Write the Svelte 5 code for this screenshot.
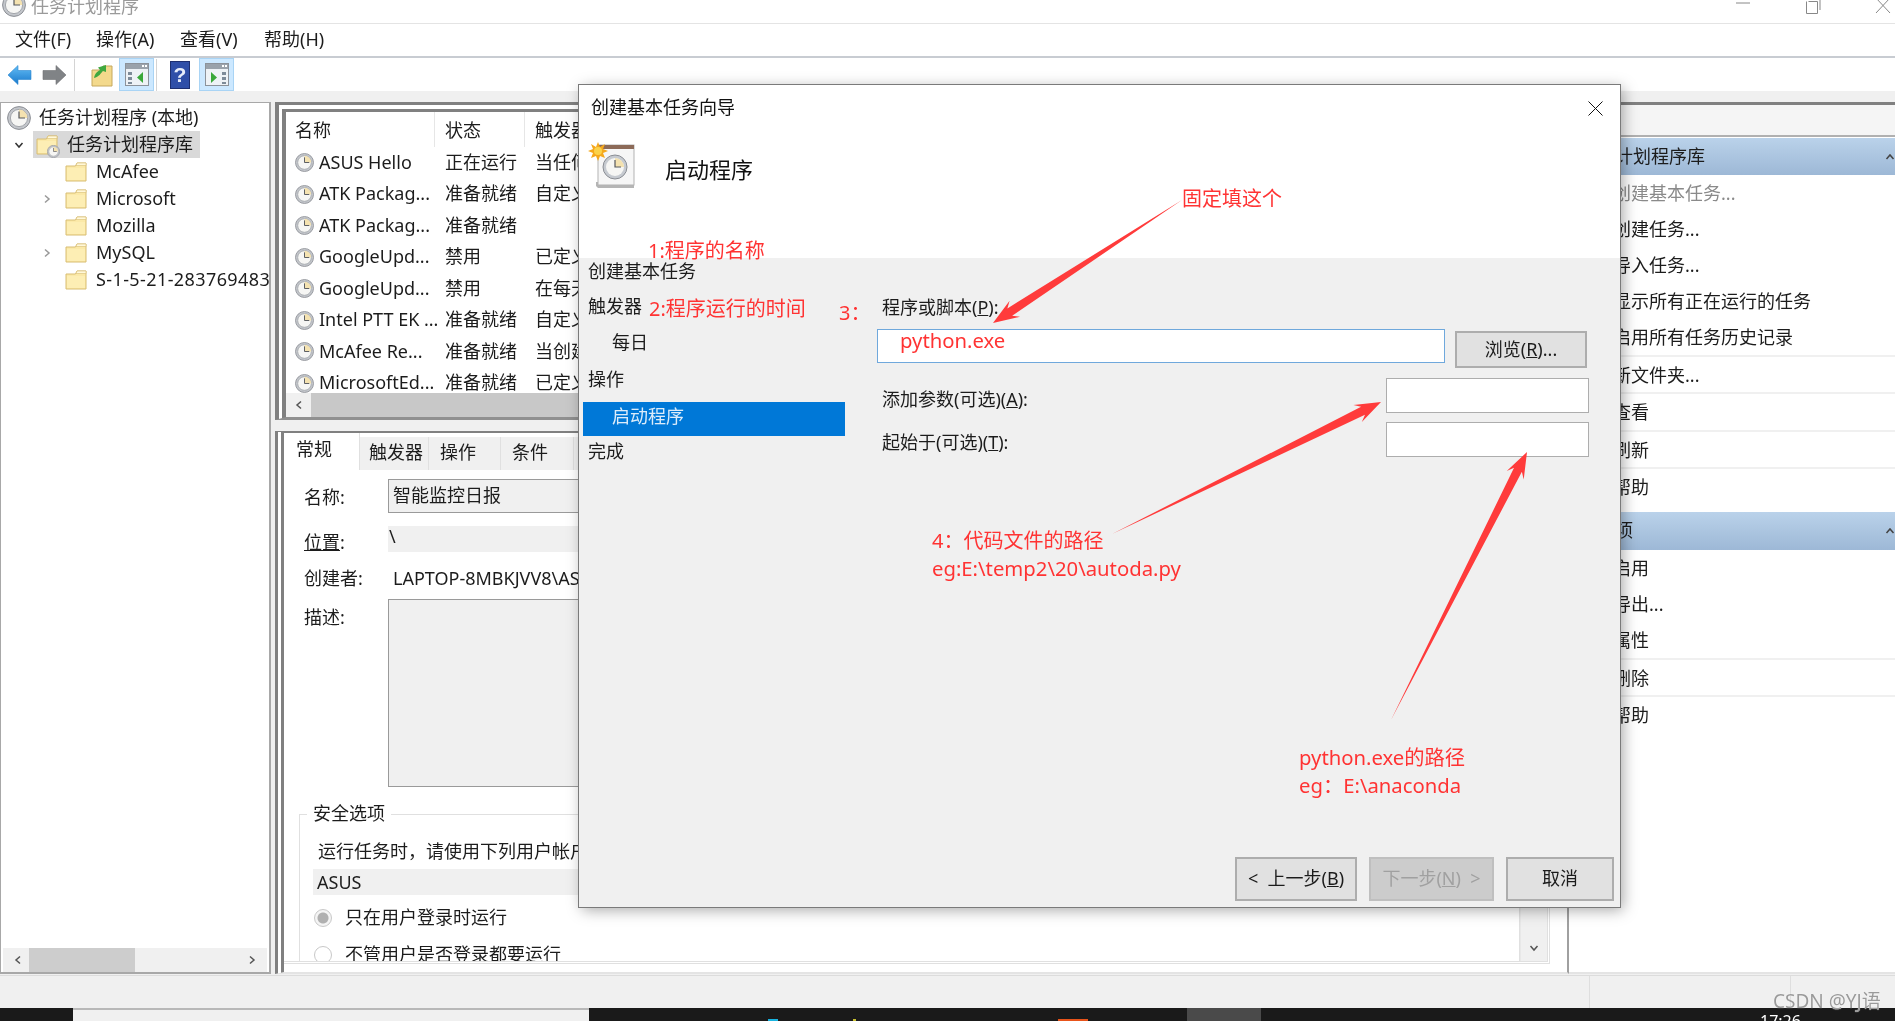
<script lang="ts">
	const menus = ['文件(F)', '操作(A)', '查看(V)', '帮助(H)'];

	const folders = [
		{ name: 'McAfee', more: false },
		{ name: 'Microsoft', more: true },
		{ name: 'Mozilla', more: false },
		{ name: 'MySQL', more: true },
		{ name: 'S-1-5-21-283769483', more: false, long: true }
	];

	const tasks = [
		['ASUS Hello', '正在运行', '当任何用户登录时'],
		['ATK Packag...', '准备就绪', '自定义'],
		['ATK Packag...', '准备就绪', ''],
		['GoogleUpd...', '禁用', '已定义多个触发器'],
		['GoogleUpd...', '禁用', '在每天的 11:00'],
		['Intel PTT EK ...', '准备就绪', '自定义'],
		['McAfee Re...', '准备就绪', '当创建或修改任务时'],
		['MicrosoftEd...', '准备就绪', '已定义多个触发器']
	];

	const libActions = [
		{ text: '创建基本任务...', off: true },
		{ text: '创建任务...' },
		{ text: '导入任务...' },
		{ text: '显示所有正在运行的任务' },
		{ text: '启用所有任务历史记录', sep: true },
		{ text: '新文件夹...', sep: true },
		{ text: '查看', sep: true },
		{ text: '刷新', sep: true },
		{ text: '帮助' }
	];

	const itemActions = [
		{ text: '启用' },
		{ text: '导出...' },
		{ text: '属性', sep: true },
		{ text: '删除', sep: true },
		{ text: '帮助' }
	];

	const steps = [
		{ text: '创建基本任务', h: 28 },
		{ text: '触发器', h: 42 },
		{ text: '每日', h: 30, sub: true },
		{ text: '操作', h: 44 },
		{ text: '启动程序', h: 34, sub: true, on: true },
		{ text: '完成', h: 32 }
	];

	const notes = [
		{ x: 1182, y: 199, text: '固定填这个' },
		{ x: 648, y: 251, text: '1:程序的名称' },
		{ x: 649, y: 309, text: '2:程序运行的时间' },
		{ x: 839, y: 313, text: '3：' },
		{ x: 900, y: 340, text: 'python.exe', latin: true },
		{ x: 932, y: 541, text: '4：代码文件的路径' },
		{ x: 932, y: 568, text: 'eg:E:\\temp2\\20\\autoda.py', latin: true },
		{ x: 1299, y: 757, text: 'python.exe的路径', latin: true },
		{ x: 1299, y: 785, text: 'eg：E:\\anaconda', latin: true }
	];

	// wedge arrow, thin at the tail and thick at the neck
	function arrow(tx: number, ty: number, px: number, py: number) {
		const len = Math.hypot(px - tx, py - ty);
		const dx = (px - tx) / len;
		const dy = (py - ty) / len;
		const at = (back: number, side: number) =>
			`${px - dx * back - dy * side},${py - dy * back + dx * side}`;
		return [`${tx},${ty}`, at(20, 4.4), at(26, 9.5), `${px},${py}`, at(26, -9.5), at(20, -4.4)].join(' ');
	}

	const arrows = [
		arrow(1182, 200, 993, 323),
		arrow(1112, 534, 1381, 402),
		arrow(1391, 720, 1527, 452)
	];
</script>

{#snippet clock(size: number)}
	<svg class="icon" width={size} height={size} viewBox="0 0 24 24">
		<circle cx="12" cy="12" r="11.4" fill="#c3c6cb" stroke="#8b8e94" />
		<circle cx="12" cy="12" r="8.6" fill="#f6f6f4" stroke="#a4a7ac" />
		<path d="M12 12V3.6A8.4 8.4 0 0 1 20.4 12Z" fill="#f4e2b0" />
		<path d="M12 5.5V12H18" fill="none" stroke="#55585e" stroke-width="1.2" />
	</svg>
{/snippet}

{#snippet folder()}
	<svg class="icon" width="22" height="20" viewBox="0 0 22 20">
		<path d="M1 4V19H21V1H12L10.5 4Z" fill="#fbe9a8" stroke="#d8bd73" />
		<path d="M12 1H21V3.5H11Z" fill="#fff8da" stroke="#d8bd73" stroke-width=".6" />
		<path d="M2 6H20V18H2Z" fill="#fdeeb4" />
	</svg>
{/snippet}

{#snippet chevron(dir: string, color = '#555')}
	<svg class="icon chev {dir}" width="10" height="10" viewBox="0 0 10 10">
		<path d="M3 1.5 7 5 3 8.5" fill="none" stroke={color} stroke-width="1.5" />
	</svg>
{/snippet}

{#snippet paneIcon(flip: boolean)}
	<svg width="24" height="23" viewBox="0 0 24 23">
		<rect x=".5" y=".5" width="23" height="22" fill="#eef2f6" stroke="#8c929a" />
		<rect x="1" y="1" width="22" height="5" fill="#9aa2ab" />
		<rect x="17" y="2" width="2" height="2" fill="#fff" />
		<rect x="20" y="2" width="2" height="2" fill="#fff" />
		<g fill="#7d8b99">
			<rect x={flip ? 17 : 3} y="9" width="4" height="3" />
			<rect x={flip ? 17 : 3} y="14" width="4" height="3" />
			<rect x={flip ? 17 : 3} y="19" width="4" height="2" />
		</g>
		<path d={flip ? 'M6 9 12 14.5 6 20Z' : 'M18 9 12 14.5 18 20Z'} fill="#3aa83a" />
	</svg>
{/snippet}

<div class="win">
	<header class="titlebar">
		<div class="title-icon">{@render clock(24)}</div>
		<span class="title-text">任务计划程序</span>
		<div class="controls">
			<svg width="16" height="10" viewBox="0 0 16 10"><path d="M1 5H15" stroke="#888" /></svg>
			<svg width="16" height="16" viewBox="0 0 16 16"><path d="M3.5 3.5H12.5V15.5H1.5V3.5M4 .5H15V12" fill="none" stroke="#888" /></svg>
			<svg width="16" height="16" viewBox="0 0 16 16"><path d="M1 0 15 15M15 0 1 15" stroke="#888" /></svg>
		</div>
	</header>

	<nav class="menubar">
		{#each menus as m}
			<span class="menu">{m}</span>
		{/each}
	</nav>

	<div class="toolbar">
		<svg class="tool-back" width="25" height="24" viewBox="0 0 25 24">
			<defs>
				<linearGradient id="bk" x1="0" y1="0" x2="0" y2="1">
					<stop offset="0" stop-color="#63bdf5" />
					<stop offset="1" stop-color="#1878cc" />
				</linearGradient>
			</defs>
			<path d="M1 12 11 2.5V7.5H24V16.5H11V21.5Z" fill="url(#bk)" stroke="#2a86d0" stroke-width=".6" />
		</svg>
		<svg class="tool-fwd" width="25" height="24" viewBox="0 0 25 24">
			<path d="M24 12 14 2.5V7.5H1V16.5H14V21.5Z" fill="#808386" stroke="#6e7073" stroke-width=".6" />
		</svg>
		<span class="tool-sep first"></span>
		<svg class="tool-up" width="22" height="24" viewBox="0 0 22 24">
			<path d="M1 7V23H21V3H12L10 7Z" fill="#f3d98c" stroke="#c6a85c" />
			<path d="M3 15C4 10 7 8 9 7L7 4.5 15 2 15 9 12 8C10 10 8 14 3 15Z" fill="#3fa83f" />
		</svg>
		<span class="tool-btn">{@render paneIcon(false)}</span>
		<span class="tool-sep"></span>
		<svg class="tool-help" width="20" height="28" viewBox="0 0 20 28">
			<rect x=".5" y=".5" width="19" height="27" fill="#2f4fa8" stroke="#1d2f70" />
			<text x="10" y="21" text-anchor="middle" font-size="21" font-family="Liberation Sans" font-weight="700" fill="#e8eefa">?</text>
		</svg>
		<span class="tool-btn last">{@render paneIcon(true)}</span>
	</div>

	<main class="main">
		<aside class="tree">
			<div class="tree-list">
				<div class="tree-row root">
					{@render clock(24)}
					<span>任务计划程序 (本地)</span>
				</div>
				<div class="tree-row lib">
					{@render chevron('down', '#333')}
					<div class="lib-sel">
						<span class="lib-icon">
							{@render folder()}
							<span class="lib-clock">{@render clock(13)}</span>
						</span>
						<span>任务计划程序库</span>
					</div>
				</div>
				{#each folders as f}
					<div class="tree-row child">
						<span class="child-arrow">
							{#if f.more}{@render chevron('right', '#999')}{/if}
						</span>
						{@render folder()}
						<span class="child-name" class:long={f.long}>{f.name}</span>
					</div>
				{/each}
			</div>
			<div class="hscroll">
				{@render chevron('left', '#555')}
				<span class="hthumb"></span>
				{@render chevron('right', '#555')}
			</div>
		</aside>

		<section class="center">
			<div class="pane list-pane">
				<div class="list-head grid">
					<span>名称</span>
					<span>状态</span>
					<span>触发器</span>
				</div>
				<div class="list-body">
					{#each tasks as t}
						<div class="grid list-row">
							<span class="task-name">{@render clock(19)}<span>{t[0]}</span></span>
							<span>{t[1]}</span>
							<span>{t[2]}</span>
						</div>
					{/each}
				</div>
				<div class="list-scroll">
					<span class="ls-btn">{@render chevron('left', '#555')}</span>
				</div>
			</div>

			<div class="pane detail-pane">
				<div class="tabs">
					<span class="tab active">常规</span>
					<span class="tab t1">触发器</span>
					<span class="tab t2">操作</span>
					<span class="tab t3">条件</span>
					<span class="tab t3">设置</span>
					<span class="tab t3">历史记录(已禁用)</span>
				</div>
				<div class="detail-body">
					<div class="detail-form">
						<div class="field f-name">
							<span class="lab">名称:</span>
							<div class="val box">智能监控日报</div>
						</div>
						<div class="field f-loc">
							<span class="lab"><u>位置</u>:</span>
							<div class="val plain">\</div>
						</div>
						<div class="field f-by">
							<span class="lab">创建者:</span>
							<div class="val bare">LAPTOP-8MBKJVV8\ASUS</div>
						</div>
						<div class="field f-desc">
							<span class="lab">描述:</span>
							<div class="val area"></div>
						</div>
						<div class="security">
							<span class="legend">安全选项</span>
							<div class="sec-line">运行任务时，请使用下列用户帐户:</div>
							<div class="sec-user">ASUS</div>
							<div class="radio-row">
								<span class="radio on"></span>
								<span>只在用户登录时运行</span>
							</div>
							<div class="radio-row second">
								<span class="radio"></span>
								<span>不管用户是否登录都要运行</span>
							</div>
						</div>
					</div>
					<div class="vscroll">{@render chevron('down', '#555')}</div>
				</div>
			</div>
		</section>

		<aside class="actions">
			<div class="act-title">操作</div>
			<div class="act-head"><span>任务计划程序库</span>{@render chevron('up', '#444')}</div>
			{#each libActions as a}
				<div class="act-row" class:off={a.off} class:sep={a.sep}>{a.text}</div>
			{/each}
			<div class="act-head second"><span>所选项</span>{@render chevron('up', '#444')}</div>
			{#each itemActions as a}
				<div class="act-row" class:sep={a.sep}>{a.text}</div>
			{/each}
		</aside>
	</main>

	<div class="statusbar">
		<span class="st a"></span>
		<span class="st b"></span>
	</div>

	<footer class="taskbar">
		<span class="tb-start"></span>
		<span class="tb-search"></span>
		<span class="tb-dot cyan"></span>
		<span class="tb-dot yellow"></span>
		<span class="tb-dot orange"></span>
		<span class="tb-active"></span>
		<span class="tb-time">17:26</span>
	</footer>

	<div class="dialog">
		<div class="dlg-title">
			<span>创建基本任务向导</span>
			<svg width="15" height="15" viewBox="0 0 15 15"><path d="M.5.5 14.5 14.5M14.5.5.5 14.5" stroke="#111" /></svg>
		</div>
		<div class="dlg-head">
			<svg width="48" height="47" viewBox="0 0 48 47">
				<path d="M8 40V44L10 46H46V40Z" fill="#b5b5b5" />
				<rect x="10" y="3" width="36" height="40" fill="#f6f6f6" stroke="#b3b3b3" />
				<rect x="10" y="3" width="36" height="4" fill="#8c6a58" />
				<circle cx="27" cy="25" r="12" fill="#c6cad0" stroke="#8b8e94" />
				<circle cx="27" cy="25" r="9" fill="#f6f6f4" />
				<path d="M27 25V16A9 9 0 0 1 36 25Z" fill="#f4e2b0" />
				<path d="M27 18V25H33" fill="none" stroke="#55585e" stroke-width="1.2" />
				<path d="M10 0 12 5 17 2 15 7 20 9 15 11 17 16 12 14 10 19 8 14 3 16 5 11 0 9 5 7 3 2 8 5Z" fill="#f5a81c" />
				<circle cx="10" cy="9" r="4" fill="#fbd24a" />
			</svg>
			<span class="dlg-heading">启动程序</span>
		</div>
		<div class="dlg-body">
			<div class="steps">
				{#each steps as s}
					<div class="step" class:sub={s.sub} class:on={s.on} style="height:{s.h}px">{s.text}</div>
				{/each}
			</div>
			<div class="form">
				<div class="form-label">程序或脚本(<u>P</u>):</div>
				<div class="prog-row">
					<div class="prog-input"></div>
					<button class="btn browse">浏览(<u>R</u>)...</button>
				</div>
				<div class="opt-row">
					<span class="opt-label">添加参数(可选)(<u>A</u>):</span>
					<div class="opt-input"></div>
				</div>
				<div class="opt-row next">
					<span class="opt-label">起始于(可选)(<u>T</u>):</span>
					<div class="opt-input"></div>
				</div>
			</div>
		</div>
		<div class="dlg-foot">
			<button class="btn back">&lt;&nbsp; 上一步(<u>B</u>)</button>
			<button class="btn fwd">下一步(<u>N</u>) &nbsp;&gt;</button>
			<button class="btn cancel">取消</button>
		</div>
	</div>

	<svg class="arrows" width="1895" height="1021" viewBox="0 0 1895 1021">
		{#each arrows as pts}
			<polygon points={pts} fill="#ff3b3b" />
		{/each}
	</svg>

	{#each notes as n}
		<span class="note" class:latin={n.latin} style="left:{n.x}px;top:{n.y}px">{n.text}</span>
	{/each}

	<span class="mark">CSDN @YJ语</span>
</div>

<style>
	:global(body) {
		margin: 0;
		background: #fff;
	}

	.win {
		position: relative;
		width: 1895px;
		height: 1021px;
		overflow: hidden;
		display: flex;
		flex-direction: column;
		background: #f0f0f0;
		color: #1c1c1c;
		font-family: 'Noto Sans', 'Noto Sans CJK SC', sans-serif;
		font-size: 18px;
		line-height: 1.2;
		filter: blur(0.4px);
	}

	.icon {
		flex: none;
		display: block;
	}

	.chev.down {
		transform: rotate(90deg);
	}
	.chev.left {
		transform: rotate(180deg);
	}
	.chev.up {
		transform: rotate(-90deg);
	}

	.titlebar {
		height: 23px;
		flex: none;
		display: flex;
		background: #fff;
		border-bottom: 1px solid #e4e4e4;
		overflow: hidden;
	}

	.title-icon {
		margin: -7px 0 0 2px;
	}

	.title-text {
		margin: -4px 0 0 5px;
		color: #9a9a9a;
	}

	.controls {
		margin-left: auto;
		display: flex;
		gap: 54px;
		padding-right: 4px;
		margin-top: -2px;
		align-items: flex-start;
	}

	.menubar {
		height: 32px;
		flex: none;
		display: flex;
		align-items: center;
		gap: 22px;
		padding-left: 15px;
		background: #fff;
		border-bottom: 2px solid #c8ccd2;
	}

	.menu {
		width: 62px;
		white-space: nowrap;
	}
	.menu:first-child {
		width: 59px;
	}

	.toolbar {
		height: 33px;
		flex: none;
		display: flex;
		align-items: center;
		background: #fff;
		border-bottom: 1px solid #f0f0f0;
	}

	.tool-back {
		margin-left: 7px;
	}
	.tool-fwd {
		margin-left: 10px;
	}

	.tool-sep {
		width: 1px;
		height: 32px;
		background: #d4d4d4;
		margin-left: 2px;
	}
	.tool-sep.first {
		margin-left: 7px;
	}

	.tool-up {
		margin-left: 16px;
	}

	.tool-btn {
		width: 35px;
		height: 33px;
		box-sizing: border-box;
		display: flex;
		align-items: center;
		justify-content: center;
		background: #cce8ff;
		border: 1px solid #a9d4f5;
		margin-left: 6px;
	}
	.tool-btn.last {
		margin-left: 9px;
	}

	.tool-help {
		margin-left: 13px;
	}

	.main {
		flex: 1;
		min-height: 0;
		display: flex;
		padding-top: 10px;
	}

	.tree {
		width: 271px;
		flex: none;
		box-sizing: border-box;
		display: flex;
		flex-direction: column;
		background: #fff;
		border: 1px solid #a8a8a8;
		border-width: 1px 2px 2px 1px;
	}

	.tree-list {
		flex: 1;
		overflow: hidden;
	}

	.tree-row {
		height: 27px;
		display: flex;
		align-items: center;
		white-space: nowrap;
	}

	.tree-row.root {
		padding-left: 6px;
		gap: 8px;
		margin-top: 1px;
	}

	.tree-row.lib {
		padding-left: 13px;
		gap: 9px;
	}

	.lib-sel {
		width: 167px;
		height: 27px;
		display: flex;
		align-items: center;
		gap: 9px;
		padding-left: 3px;
		box-sizing: border-box;
		background: #d9d9d9;
	}

	.lib-icon {
		position: relative;
		display: block;
	}

	.lib-clock {
		position: absolute;
		right: -2px;
		bottom: -3px;
	}

	.child-arrow {
		width: 10px;
		margin-left: 41px;
		flex: none;
	}

	.tree-row.child :global(svg:not(.chev)) {
		margin-left: 13px;
	}

	.child-name {
		margin-left: 9px;
	}

	.child-name.long {
		letter-spacing: 0.4px;
	}

	.hscroll {
		height: 24px;
		margin: 0 2px;
		flex: none;
		display: flex;
		align-items: center;
		background: #f0f0f0;
		padding: 0 10px;
	}

	.hthumb {
		width: 106px;
		height: 24px;
		margin: 0 auto 0 6px;
		background: #cdcdcd;
	}

	.center {
		width: 1294px;
		flex: none;
		margin-left: 4px;
		display: flex;
		flex-direction: column;
	}

	.pane {
		box-sizing: border-box;
		background: #fff;
		border-style: double;
		border-color: #808080;
		border-width: 10px 0 0 11px;
		overflow: hidden;
	}

	.list-pane {
		height: 318px;
		flex: none;
		display: flex;
		flex-direction: column;
		border-bottom: 3px solid #909090;
		margin-bottom: 11px;
	}

	.grid {
		display: grid;
		grid-template-columns: 149px 90px 1fr;
		white-space: nowrap;
	}

	.grid > span {
		padding-left: 10px;
	}
	.grid > span:first-child {
		padding-left: 9px;
	}

	.list-head {
		height: 35px;
		flex: none;
		align-items: center;
	}

	.list-head > span {
		height: 35px;
		line-height: 36px;
		box-sizing: border-box;
		border-right: 1px solid #e6e6e6;
	}

	.list-body {
		flex: 1;
		min-height: 0;
		overflow: hidden;
	}

	.list-row {
		height: 31.5px;
		align-items: center;
	}

	.task-name {
		display: flex;
		align-items: center;
		gap: 5px;
	}

	.list-scroll {
		height: 24px;
		flex: none;
		background: #c8c8c8;
	}

	.ls-btn {
		width: 25px;
		height: 24px;
		background: #f0f0f0;
		display: flex;
		align-items: center;
		justify-content: center;
	}

	.detail-pane {
		flex: 1;
		min-height: 0;
		display: flex;
		flex-direction: column;
		padding: 0 17px 0 0;
		border-width: 2px 2px 2px 3px;
		border-style: solid;
		border-color: #808080 #a0a0a0 #e4e4e4 #808080;
		border-left-width: 9px;
		border-left-style: double;
	}

	.tabs {
		height: 37px;
		flex: none;
		display: flex;
		align-items: flex-end;
		white-space: nowrap;
	}

	.tab {
		height: 33px;
		box-sizing: border-box;
		padding: 5px 0 0 7px;
		background: #f0f0f0;
		border-right: 1px solid #e0e0e0;
	}

	.tab.active {
		width: 76px;
		height: 37px;
		padding: 6px 0 0 12px;
		background: #fff;
	}
	.tab.t1 {
		width: 69px;
		padding-left: 9px;
	}
	.tab.t2 {
		width: 72px;
		padding-left: 11px;
	}
	.tab.t3 {
		width: 73px;
		padding-left: 11px;
	}

	.detail-body {
		height: 491px;
		flex: none;
		display: flex;
		overflow: hidden;
		border-right: 3px double #e0e0e0;
		border-bottom: 3px double #e0e0e0;
	}

	.detail-form {
		flex: 1;
		padding: 9px 0 0 20px;
		box-sizing: border-box;
		border-right: 1px solid #e8e8e8;
		overflow: hidden;
	}

	.field {
		display: flex;
		align-items: center;
	}

	.lab {
		width: 84px;
		flex: none;
	}

	.val {
		flex: 1;
		box-sizing: border-box;
	}

	.f-name {
		height: 34px;
	}
	.f-name .lab {
		padding-top: 4px;
	}

	.box {
		height: 34px;
		line-height: 30px;
		padding-left: 4px;
		background: #f0f0f0;
		border: 1px solid #9a9a9a;
	}

	.f-loc {
		height: 26px;
		margin-top: 13px;
	}
	.f-loc .lab {
		padding-top: 8px;
	}

	.plain {
		height: 26px;
		line-height: 20px;
		padding-left: 1px;
		background: #f0f0f0;
	}

	.f-by {
		height: 26px;
		margin-top: 14px;
	}

	.bare {
		padding-left: 5px;
		white-space: nowrap;
	}

	.f-desc {
		height: 188px;
		margin-top: 7px;
		align-items: flex-start;
	}
	.f-desc .lab {
		padding-top: 8px;
	}

	.area {
		height: 188px;
		background: #f0f0f0;
		border: 1px solid #9a9a9a;
	}

	.security {
		position: relative;
		margin: 27px 0 0 -5px;
		padding: 25px 0 0 13px;
		border: 1px solid #e0e0e0;
		border-bottom: none;
	}

	.legend {
		position: absolute;
		left: 7px;
		top: -12px;
		padding: 0 6px;
		background: #fff;
	}

	.sec-line {
		padding-left: 5px;
		height: 22px;
		line-height: 22px;
	}

	.sec-user {
		height: 26px;
		line-height: 26px;
		margin-top: 7px;
		padding-left: 4px;
		background: #f0f0f0;
	}

	.radio-row {
		display: flex;
		align-items: center;
		gap: 13px;
		height: 24px;
		margin: 11px 0 0 1px;
	}
	.radio-row.second {
		margin-top: 13px;
	}

	.radio {
		width: 18px;
		height: 18px;
		box-sizing: border-box;
		border: 1px solid #c8c8c8;
		border-radius: 50%;
		background: #fff;
		display: block;
	}

	.radio.on {
		background: radial-gradient(circle, #b0b0b0 0 5px, #f4f4f4 6px);
	}

	.vscroll {
		width: 26px;
		flex: none;
		background: #f0f0f0;
		display: flex;
		align-items: flex-end;
		justify-content: center;
		padding-bottom: 8px;
		box-sizing: border-box;
	}

	.actions {
		flex: 1;
		min-width: 0;
		background: #fff;
		border-top: 3px solid #808080;
		border-bottom: 2px solid #e4e4e4;
		white-space: nowrap;
		overflow: hidden;
	}

	.act-title {
		height: 30px;
		line-height: 30px;
		padding-left: 10px;
		background: #f5f5f5;
		border-bottom: 2px solid #b0b0b0;
	}

	.act-head {
		height: 37px;
		display: flex;
		align-items: center;
		justify-content: space-between;
		padding: 0 0 0 10px;
		margin-top: 1px;
		background: linear-gradient(#bad2ea, #9db8d6);
	}

	.act-head.second {
		margin-top: 7px;
		height: 38px;
	}

	.act-row {
		height: 36px;
		line-height: 36px;
		padding-left: 44px;
	}

	.act-row.off {
		color: #8a8a8a;
	}

	.act-row.sep {
		height: 37.5px;
		box-sizing: border-box;
		border-bottom: 2px solid #f0f0f0;
	}

	.statusbar {
		height: 33px;
		flex: none;
		position: relative;
		display: flex;
		box-sizing: border-box;
		border-top: 1px solid #dcdcdc;
		margin-top: 1px;
	}

	.st {
		width: 1px;
		height: 32px;
		background: #dedede;
	}
	.st.a {
		margin-left: 1589px;
	}
	.st.b {
		margin-left: 200px;
	}

	.taskbar {
		height: 13px;
		flex: none;
		display: flex;
		background: #1a1a1a;
		overflow: hidden;
	}

	.tb-start {
		width: 73px;
	}

	.tb-search {
		width: 516px;
		box-sizing: border-box;
		background: #f0f0f0;
		border-top: 2px solid #b8b8b8;
	}

	.tb-dot {
		height: 2px;
		margin-top: 11px;
	}
	.tb-dot.cyan {
		width: 10px;
		margin-left: 179px;
		background: #19b4e0;
	}
	.tb-dot.yellow {
		width: 3px;
		margin-left: 75px;
		background: #c8c030;
	}
	.tb-dot.orange {
		width: 30px;
		margin-left: 202px;
		background: #e8541a;
	}

	.tb-active {
		width: 74px;
		margin-left: 99px;
		background: #4a4a4a;
	}

	.tb-time {
		margin-left: 499px;
		color: #fff;
		font-size: 16px;
		line-height: 20px;
		padding-top: 3px;
	}

	.dialog {
		position: absolute;
		left: 579px;
		top: 85px;
		width: 1041px;
		height: 822px;
		display: flex;
		flex-direction: column;
		background: #f0f0f0;
		box-shadow:
			0 0 0 1px #7a7a7a,
			3px 3px 14px rgba(0, 0, 0, 0.35);
	}

	.dlg-title {
		height: 44px;
		flex: none;
		display: flex;
		align-items: center;
		justify-content: space-between;
		padding: 2px 17px 0 12px;
		box-sizing: border-box;
		background: #fff;
		color: #111;
	}

	.dlg-head {
		height: 129px;
		flex: none;
		box-sizing: border-box;
		display: flex;
		align-items: flex-start;
		padding: 13px 0 0 9px;
		background: #fff;
	}

	.dlg-heading {
		margin: 14px 0 0 29px;
		font-size: 22px;
		color: #111;
	}

	.dlg-body {
		flex: 1;
		min-height: 0;
		display: flex;
	}

	.steps {
		width: 262px;
		margin-left: 4px;
		flex: none;
	}

	.step {
		display: flex;
		align-items: center;
		padding-left: 5px;
		box-sizing: border-box;
	}

	.step.sub {
		padding-left: 29px;
	}

	.step.on {
		padding-bottom: 4px;
		background: #0078d7;
		color: #dcecfa;
	}

	.form {
		width: 712px;
		margin-left: 32px;
		padding-top: 35px;
		box-sizing: border-box;
	}

	.form-label {
		height: 28px;
		line-height: 28px;
		padding-left: 5px;
	}

	.prog-row {
		display: flex;
		margin-top: 8px;
		height: 39px;
		align-items: flex-start;
	}

	.prog-input {
		width: 568px;
		height: 34px;
		box-sizing: border-box;
		background: #fff;
		border: 1px solid #6fa8dc;
	}

	.btn {
		font: inherit;
		color: #1c1c1c;
		box-sizing: border-box;
		background: #e1e1e1;
		border: 2px solid #adadad;
		padding: 0;
	}

	.browse {
		width: 132px;
		height: 37px;
		margin: 2px 0 0 10px;
	}

	.opt-row {
		display: flex;
		align-items: flex-start;
		justify-content: space-between;
		height: 35px;
		margin-top: 10px;
		padding-left: 5px;
	}
	.opt-row.next {
		margin-top: 9px;
	}

	.opt-label {
		padding-top: 11px;
	}
	.next .opt-label {
		padding-top: 10px;
	}

	.opt-input {
		width: 203px;
		height: 35px;
		box-sizing: border-box;
		background: #fff;
		border: 1px solid #adadad;
	}

	.dlg-foot {
		flex: none;
		display: flex;
		justify-content: flex-end;
		gap: 12px;
		padding: 0 6px 6px 0;
	}

	.dlg-foot .btn {
		height: 44px;
	}

	.back {
		width: 122px;
	}

	.fwd {
		width: 125px;
		background: #cccccc;
		border-color: #bfbfbf;
		color: #a0a0a0;
	}

	.cancel {
		width: 108px;
	}

	.arrows {
		position: absolute;
		left: 0;
		top: 0;
		pointer-events: none;
	}

	.note {
		position: absolute;
		transform: translateY(-50%);
		color: #ff3333;
		font-size: 20px;
		white-space: nowrap;
	}

	.note.latin {
		font-size: 20.3px;
	}

	.mark {
		position: absolute;
		left: 1773px;
		top: 990px;
		font-size: 19px;
		color: #9a9a9a;
		text-shadow: 0 0 1px #fff;
		white-space: nowrap;
	}
</style>
